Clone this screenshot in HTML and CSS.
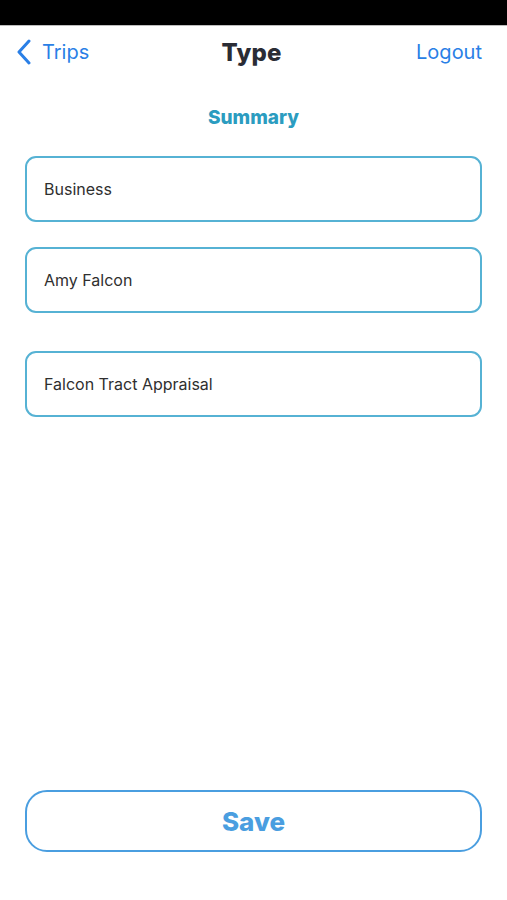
FILE: index.html
```html
<!DOCTYPE html>
<html lang="en">
<head>
    <meta charset="UTF-8">
    <meta name="viewport" content="width=device-width, initial-scale=1.0">
    <title>Type</title>
    <link rel="stylesheet" href="styles.css">
</head>
<body>
    <div class="app">
        <div class="status-bar"></div>
        <header class="nav">
            <a class="nav-back" href="#">
                <svg class="chevron" width="16" height="26" viewBox="0 0 16 26">
                    <path d="M13 2 L3 13 L13 24" fill="none" stroke="#2a7fe6" stroke-width="3" stroke-linecap="round" stroke-linejoin="round"/>
                </svg>
                <span>Trips</span>
            </a>
            <h1 class="nav-title">Type</h1>
            <a class="nav-action" href="#">Logout</a>
        </header>

        <main class="content">
            <h2 class="section-title">Summary</h2>
            <div class="field">Business</div>
            <div class="field">Amy Falcon</div>
            <div class="field field-spaced">Falcon Tract Appraisal</div>
        </main>

        <footer class="footer">
            <button class="save-btn">Save</button>
        </footer>
    </div>
</body>
</html>
```

FILE: styles.css
```css
* {
    margin: 0;
    padding: 0;
    box-sizing: border-box;
}

body {
    background-color: #fff;
    font-family: Inter, "Noto Sans", sans-serif;
}

.app {
    display: flex;
    flex-direction: column;
    width: 507px;
    height: 900px;
}

.status-bar {
    height: 26px;
    background-color: #000;
    border-bottom: 1px solid #bdbdbd;
}

.nav {
    display: grid;
    grid-template-columns: 1fr auto 1fr;
    align-items: center;
    height: 52px;
    padding: 0 25px 0 16px;
}

.nav-back,
.nav-action {
    display: flex;
    align-items: center;
    gap: 10px;
    color: #2a7fe6;
    font-size: 20px;
    text-decoration: none;
}

.nav-action {
    justify-content: flex-end;
}

.nav-title {
    padding-left: 5px;
    color: #2a2c35;
    font-size: 24px;
    font-weight: 800;
    letter-spacing: 0.2px;
}

.content {
    flex: 1;
    padding: 0 25px;
}

.section-title {
    margin: 28px 0 27px;
    text-align: center;
    color: #2b9cc0;
    font-size: 19px;
    font-weight: 800;
}

.field {
    display: flex;
    align-items: center;
    height: 66px;
    margin-bottom: 25px;
    padding: 0 17px;
    border: 2px solid #56b2d4;
    border-radius: 11px;
    color: #2f2f2f;
    font-size: 16px;
}

.field-spaced {
    margin-top: 38px;
}

.footer {
    padding: 0 25px 48px;
}

.save-btn {
    width: 100%;
    height: 62px;
    background-color: #fff;
    border: 2px solid #4a9ee0;
    border-radius: 22px;
    color: #4a9ee0;
    font-family: Inter, "Noto Sans", sans-serif;
    font-size: 26px;
    font-weight: 800;
}
```
